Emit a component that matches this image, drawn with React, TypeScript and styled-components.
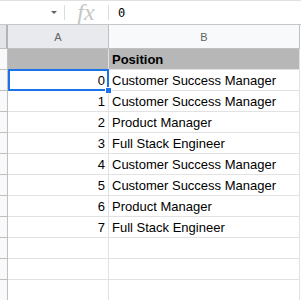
import styled, { createGlobalStyle } from "styled-components";

const GlobalStyle = createGlobalStyle`
  html, body {
    margin: 0;
    padding: 0;
    background: #ffffff;
    font-family: "Liberation Sans", Arial, sans-serif;
  }
  * {
    box-sizing: border-box;
  }
`;

const rows = [
  { id: 0, position: "Customer Success Manager" },
  { id: 1, position: "Customer Success Manager" },
  { id: 2, position: "Product Manager" },
  { id: 3, position: "Full Stack Engineer" },
  { id: 4, position: "Customer Success Manager" },
  { id: 5, position: "Customer Success Manager" },
  { id: 6, position: "Product Manager" },
  { id: 7, position: "Full Stack Engineer" },
];

const EMPTY_ROWS = 4;

export default function App() {
  return (
    <>
      <GlobalStyle />
      <Sheet>
        <FormulaBar>
          <NameBox>
            <Caret />
          </NameBox>
          <Divider />
          <FxLabel>fx</FxLabel>
          <Divider />
          <FormulaValue>0</FormulaValue>
        </FormulaBar>

        <Row $height={24}>
          <Corner />
          <ColHeader $selected $width={101}>A</ColHeader>
          <ColHeader $width={191}>B</ColHeader>
        </Row>

        <Row>
          <RowHeader />
          <HeaderCell $width={101} />
          <HeaderCell $width={191}>Position</HeaderCell>
        </Row>

        {rows.map((r) => (
          <Row key={r.id}>
            <RowHeader />
            <Cell $width={101} $align="right" $selected={r.id === 0}>
              {r.id}
              {r.id === 0 && <Handle />}
            </Cell>
            <Cell $width={191}>{r.position}</Cell>
          </Row>
        ))}

        {Array.from({ length: EMPTY_ROWS }).map((_, i) => (
          <Row key={`empty-${i}`}>
            <RowHeader />
            <Cell $width={101} />
            <Cell $width={191} />
          </Row>
        ))}
      </Sheet>
    </>
  );
}

const Sheet = styled.div`
  width: 301px;
  height: 300px;
  overflow: hidden;
  display: flex;
  flex-direction: column;
`;

const FormulaBar = styled.div`
  flex: none;
  height: 25px;
  display: flex;
  align-items: center;
  border-top: 1px solid #e0e0e0;
  border-bottom: 1px solid #c7c7c7;
`;

const NameBox = styled.div`
  width: 64px;
  height: 100%;
  position: relative;
`;

// little dropdown triangle in the name box
const Caret = styled.span`
  position: absolute;
  left: 51px;
  top: 10px;
  width: 0;
  height: 0;
  border-left: 3px solid transparent;
  border-right: 3px solid transparent;
  border-top: 3px solid #5f6368;
`;

const Divider = styled.div`
  width: 1px;
  height: 15px;
  background: #dadce0;
`;

const FxLabel = styled.div`
  width: 43px;
  text-align: center;
  font-family: "Liberation Serif", "Times New Roman", serif;
  font-style: italic;
  font-size: 24px;
  color: #c4c7c5;
  line-height: 23px;
  padding-right: 1px;
`;

const FormulaValue = styled.div`
  padding-left: 9px;
  font-family: "DejaVu Sans Mono", monospace;
  font-size: 12px;
  color: #000000;
`;

const Row = styled.div<{ $height?: number }>`
  flex: none;
  display: flex;
  height: ${(p) => p.$height ?? 21}px;
`;

const Corner = styled.div`
  width: 8px;
  background: #e3e5e8;
  border-right: 2px solid #b4b4b4;
  border-bottom: 1px solid #c0c0c0;
`;

const RowHeader = styled.div`
  width: 8px;
  background: #f8f9fa;
  border-right: 1px solid #c0c0c0;
  border-bottom: 1px solid #c0c0c0;
`;

const ColHeader = styled.div<{ $width: number; $selected?: boolean }>`
  width: ${(p) => p.$width}px;
  background: ${(p) => (p.$selected ? "#e8eaed" : "#f8f9fa")};
  border-right: 1px solid #c0c0c0;
  border-bottom: 1px solid #c0c0c0;
  color: #5f6368;
  font-size: 11px;
  display: flex;
  align-items: center;
  justify-content: center;
  padding-top: 1px;
`;

const HeaderCell = styled.div<{ $width: number }>`
  width: ${(p) => p.$width}px;
  background: #b7b7b7;
  border-right: 1px solid #e2e2e2;
  border-bottom: 1px solid #e2e2e2;
  font-size: 13px;
  font-weight: bold;
  color: #000000;
  display: flex;
  align-items: center;
  padding: 0 3px;
`;

const Cell = styled.div<{ $width: number; $align?: "left" | "right"; $selected?: boolean }>`
  position: relative;
  width: ${(p) => p.$width}px;
  border-right: 1px solid #e2e2e2;
  border-bottom: 1px solid #e2e2e2;
  font-size: 13px;
  color: #000000;
  display: flex;
  align-items: center;
  justify-content: ${(p) => (p.$align === "right" ? "flex-end" : "flex-start")};
  padding: 0 3px;
  white-space: nowrap;

  ${(p) =>
    p.$selected &&
    `
    &::after {
      content: "";
      position: absolute;
      top: -1px;
      left: 0;
      right: -1px;
      bottom: -1px;
      border: 2px solid #1a73e8;
      pointer-events: none;
    }
  `}
`;

// fill handle at the selection's corner
const Handle = styled.span`
  position: absolute;
  right: -4px;
  bottom: -4px;
  width: 7px;
  height: 7px;
  background: #1a73e8;
  border: 1px solid #ffffff;
  z-index: 2;
`;
